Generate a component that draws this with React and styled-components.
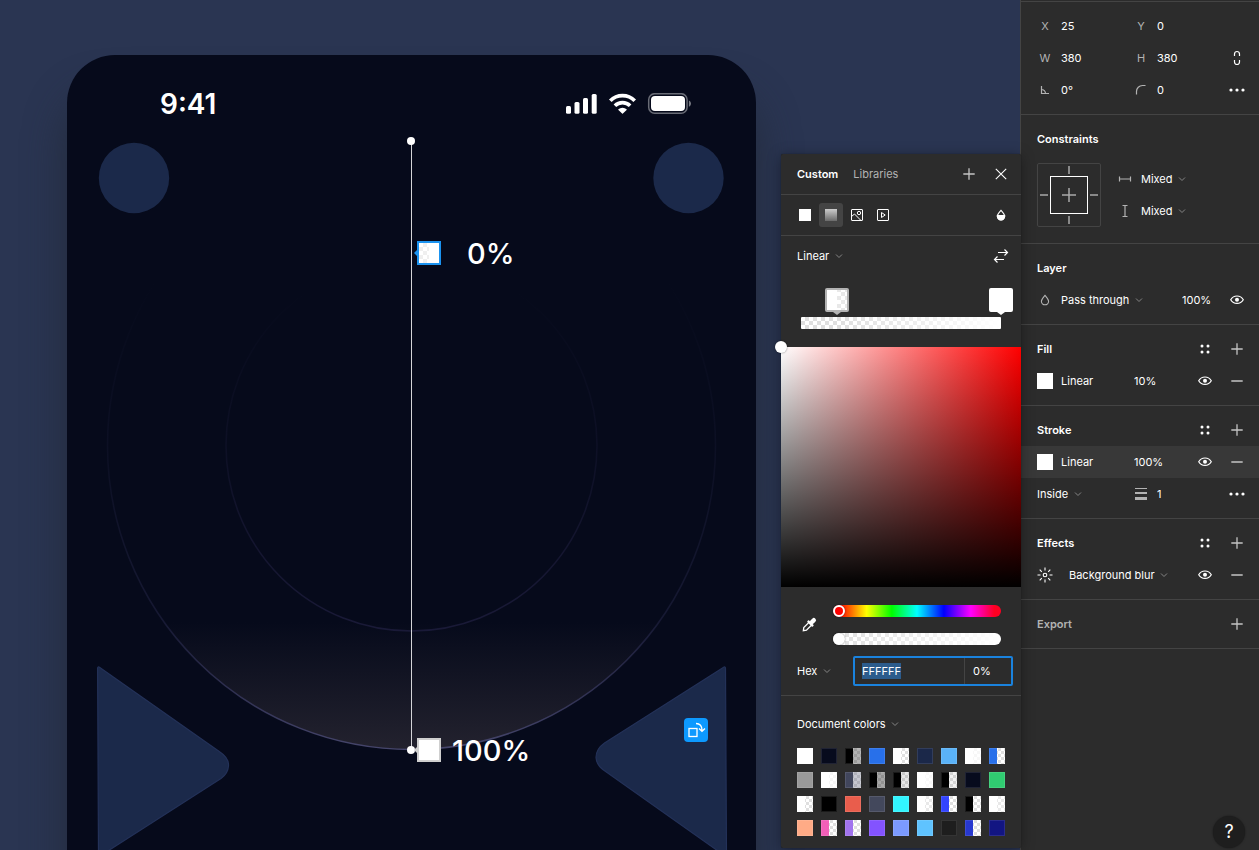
// Vector editor screen: canvas with the phone frame, the gradient picker and the design panel.

import React, { useEffect, useRef, useState } from 'react'
import styled, { createGlobalStyle } from 'styled-components'

const GlobalStyle = createGlobalStyle`
    * {
        box-sizing: border-box;
    }

    body {
        margin: 0;
        background: #2a3552;
        color: #fff;
        font-family: Inter, "Liberation Sans", sans-serif;
        font-size: 11px;
        line-height: 16px;
    }

    button, input, select {
        font: inherit;
        color: inherit;
        background: none;
        border: 0;
        margin: 0;
        padding: 0;
        outline: none;
    }

    svg {
        display: block;
        flex: none;
    }
`;

const checker = 'repeating-conic-gradient(#dfdfdf 0% 25%, #fff 0% 50%)';

/* ---------- shared parts ---------- */

const IconButton = styled.button`
    width: 32px;
    height: 32px;
    flex: none;
    display: flex;
    align-items: center;
    justify-content: center;
    color: ${({ $dim }) => ($dim ? '#c4c4c4' : '#fff')};
`;

const SelectWrap = styled.label`
    display: flex;
    align-items: center;
    gap: 4px;

    select {
        appearance: none;
    }

    svg {
        color: #858585;
        pointer-events: none;
    }
`;

const Spacer = styled.span`
    flex: 1;
`;

// every glyph is drawn round the middle of its box
function Icon({ children, size = 24, width = 1 }) {
  return (
    <svg width={size} height={size} viewBox={`${-size / 2} ${-size / 2} ${size} ${size}`}
        fill="none" stroke="currentColor" strokeWidth={width} aria-hidden="true">
        {children}
    </svg>
  )
}

const Plus = () => <Icon width={1.3}><path d="M-5.7 0H5.7M0 -5.7V5.7" /></Icon>
const Minus = () => <Icon width={1.5}><path d="M-5.7 0H5.7" /></Icon>
const Chevron = () => <Icon size={10}><path d="M-3 -1.5L0 1.5L3 -1.5" /></Icon>

const Eye = () => (
  <Icon width={1.2}>
      <path d="M-6.3 -0.3C-4.8 -2.8 -2.6 -4 0 -4S4.8 -2.8 6.3 -0.3C4.8 2.2 2.6 3.4 0 3.4S-4.8 2.2 -6.3 -0.3Z" />
      <circle cy="-0.3" r="2" fill="currentColor" stroke="none" />
  </Icon>
)

const Styles = () => (
  <Icon>
      <g fill="currentColor" stroke="none">
          <circle cx="-3" cy="-3" r="1.5" />
          <circle cx="3" cy="-3" r="1.5" />
          <circle cx="-3" cy="3" r="1.5" />
          <circle cx="3" cy="3" r="1.5" />
      </g>
  </Icon>
)

const More = () => (
  <Icon>
      <g fill="currentColor" stroke="none">
          <circle cx="-6" r="1.6" />
          <circle r="1.6" />
          <circle cx="6" r="1.6" />
      </g>
  </Icon>
)

function Dropdown({ label, value }) {
  return (
    <SelectWrap>
        <select aria-label={label} defaultValue={value}>
            <option>{value}</option>
        </select>
        <Chevron />
    </SelectWrap>
  )
}

/* ---------- canvas ---------- */

const Page = styled.div`
    display: flex;
    height: 100vh;
    overflow: hidden;
    position: relative;
`;

const Canvas = styled.main`
    flex: 1;
    min-width: 0;
    position: relative;
    overflow: hidden;
    background: #2a3552;
`;

const Phone = styled.section`
    position: absolute;
    left: 67px;
    top: 55px;
    width: 689px;
    height: 1400px;
    border-radius: 48px;
    background: #060a1b;
    box-shadow: 0 40px 40px rgba(34, 42, 56, 0.9);
`;

const StatusBar = styled.div`
    position: relative;
    display: flex;
    align-items: center;
    justify-content: space-between;
    padding: 33px 64px 0 93px;
    font-size: 28px;
    line-height: 32px;
    font-weight: 600;
`;

const Artwork = styled.svg`
    position: absolute;
    left: 0;
    top: 0;
`;

const GradientLine = styled.div`
    position: absolute;
    left: 411px;
    top: 141px;
    width: 1px;
    height: 609px;
    background: #d4d4d8;
`;

const EndPoint = styled.button`
    position: absolute;
    left: -4px;
    top: ${({ $end }) => ($end ? '605px' : '-4px')};
    width: 8px;
    height: 8px;
    border-radius: 50%;
    background: #fff;
`;

const CanvasStop = styled.button`
    position: absolute;
    left: 417px;
    top: ${({ $top }) => $top}px;
    width: 24px;
    height: 24px;
    border: 2px solid ${({ $active }) => ($active ? '#1b93f0' : '#cfcfcf')};
    background: ${({ $active }) => ($active
        ? `linear-gradient(90deg, rgba(255, 255, 255, 0.5) 50%, #fff 50%), ${checker} 0 0 / 8px 8px`
        : '#fff')};

    &::before {
        content: '';
        position: absolute;
        left: -5px;
        top: 7px;
        border: solid transparent;
        border-width: 3px 3px 3px 0;
        border-right-color: ${({ $active }) => ($active ? '#1b93f0' : '#cfcfcf')};
    }
`;

const StopLabel = styled.span`
    position: absolute;
    left: ${({ $left }) => $left}px;
    top: ${({ $top }) => $top}px;
    font-size: 29px;
    line-height: 36px;
    font-weight: 500;
`;

const RotateBadge = styled.button`
    position: absolute;
    left: 684px;
    top: 718px;
    width: 24px;
    height: 24px;
    border-radius: 4px;
    background: #0d99ff;
`;

function StatusIcons() {
  return (
    <svg width="126" height="22" viewBox="0 0 126 22" fill="#fff" aria-hidden="true">
        <rect x="0" y="13" width="5" height="7.7" rx="1.5" />
        <rect x="8.5" y="9" width="5" height="11.7" rx="1.5" />
        <rect x="17" y="5" width="5" height="15.7" rx="1.5" />
        <rect x="25.7" y="1" width="5" height="19.7" rx="1.5" />
        <g fill="none" stroke="#fff" strokeWidth="3.7">
            <path d="M44.3 7.7a17.3 17.3 0 0 1 24.4 0" />
            <path d="M48.9 12.7a10.8 10.8 0 0 1 15.2 0" />
        </g>
        <path d="M52.4 16.3a6 6 0 0 1 8.2 0a.4 .4 0 0 1 0 .6l-3.7 3.7a.6 .6 0 0 1 -.8 0l-3.7-3.7a.4 .4 0 0 1 0-.6z" />
        <rect x="82.7" y="0.7" width="38.4" height="19.6" rx="6" fill="none" stroke="#fff" strokeOpacity="0.4" strokeWidth="1.5" />
        <rect x="85" y="3" width="34" height="15" rx="4" />
        <path d="M122.9 7.4v6.4c1.3-.5 2.1-1.8 2.1-3.2s-.8-2.7-2.1-3.2z" opacity="0.45" />
    </svg>
  )
}

function PhoneArtwork() {
  return (
    <Artwork width="689" height="1000" viewBox="67 55 689 1000" aria-hidden="true">
        <defs>
            <linearGradient id="glow" x1="0" y1="622" x2="0" y2="750" gradientUnits="userSpaceOnUse">
                <stop offset="0" stopColor="#23222e" stopOpacity="0" />
                <stop offset="1" stopColor="#23222e" />
            </linearGradient>
            <linearGradient id="rim" x1="0" y1="280" x2="0" y2="750" gradientUnits="userSpaceOnUse">
                <stop offset="0" stopColor="#34345f" stopOpacity="0" />
                <stop offset="0.4" stopColor="#34345f" stopOpacity="0.15" />
                <stop offset="0.72" stopColor="#34345f" stopOpacity="0.35" />
                <stop offset="1" stopColor="#46466c" />
            </linearGradient>
            <linearGradient id="innerRim" x1="0" y1="290" x2="0" y2="631" gradientUnits="userSpaceOnUse">
                <stop offset="0" stopColor="#1a1a38" stopOpacity="0" />
                <stop offset="0.5" stopColor="#1a1a38" stopOpacity="0.4" />
                <stop offset="1" stopColor="#1a1a38" />
            </linearGradient>
        </defs>
        <circle cx="134" cy="178" r="35.2" fill="#1b294a" />
        <circle cx="688.5" cy="178" r="35.2" fill="#1b294a" />
        <circle cx="411.5" cy="445.5" r="304" fill="url(#glow)" stroke="url(#rim)" strokeWidth="1.5" />
        <circle cx="411.5" cy="445.5" r="185.5" fill="none" stroke="url(#innerRim)" strokeWidth="1.5" />
        <g fill="#1b294a" stroke="#233158" strokeWidth="1.2" strokeLinejoin="round">
            <path d="M97.6 668.5Q97.6 666 99.8 667.4L220 752Q229 758 228.5 766Q228 773.5 221 778.5L98.5 857Z" />
            <path d="M725.5 668.5Q725.5 666 723.3 667.4L604.5 743Q596 749 596 757.5Q596.5 765 603.5 770L726.5 857Z" />
        </g>
    </Artwork>
  )
}

/* ---------- gradient picker ---------- */

const Picker = styled.aside`
    position: absolute;
    top: 154px;
    right: 238px;
    width: 240px;
    background: #2c2c2c;
    border-radius: 2px;
    box-shadow: 0 2px 14px rgba(0, 0, 0, 0.35), 0 0 1px rgba(0, 0, 0, 0.6);
`;

const PickerHeader = styled.header`
    display: flex;
    align-items: center;
    height: 41px;
    padding: 0 4px 0 16px;
    border-bottom: 1px solid #444;
`;

const Tab = styled.button`
    margin-right: 15px;
    font-weight: ${({ $active }) => ($active ? 600 : 400)};
    color: ${({ $active }) => ($active ? '#fff' : '#b3b3b3')};
`;

const TypeBar = styled.div`
    display: flex;
    align-items: center;
    gap: 2px;
    height: 41px;
    padding: 0 4px 0 12px;
    border-bottom: 1px solid #444;
`;

const TypeButton = styled.button`
    width: 24px;
    height: 24px;
    border-radius: 3px;
    background: ${({ $active }) => ($active ? '#444' : 'none')};
`;

const ModeRow = styled.div`
    display: flex;
    align-items: center;
    justify-content: space-between;
    height: 40px;
    padding: 0 4px 0 16px;
`;

const StopTrack = styled.div`
    position: relative;
    margin: 0 20px;
    padding: 41px 0 18px;
`;

const StopBar = styled.div`
    height: 12px;
    border-radius: 1px;
    background: linear-gradient(90deg, rgba(255, 255, 255, 0) 18%, #fff), ${checker} 0 0 / 8px 8px;
`;

const StopHandle = styled.button`
    position: absolute;
    top: 12px;
    left: ${({ $at }) => $at}%;
    transform: translateX(-50%);
    width: 24px;
    height: 24px;
    border: 2px solid ${({ $active }) => ($active ? '#b3b3b3' : '#fff')};
    border-radius: 2px;
    background: ${({ $active }) => ($active
        ? `linear-gradient(90deg, #fff 50%, rgba(255, 255, 255, 0.3) 50%), ${checker} 2px 2px / 8px 8px`
        : '#fff')};

    &::after {
        content: '';
        position: absolute;
        left: 6px;
        top: 22px;
        border: solid transparent;
        border-width: 3px 4px 0;
        border-top-color: ${({ $active }) => ($active ? '#b3b3b3' : '#fff')};
    }
`;

const Saturation = styled.div`
    position: relative;
    height: 240px;
    background: linear-gradient(0deg, #000, transparent), linear-gradient(90deg, #fff, #f00);
`;

const SaturationHandle = styled.button`
    position: absolute;
    left: -6px;
    top: -6px;
    width: 12px;
    height: 12px;
    border-radius: 50%;
    background: #fff;
    box-shadow: 0 0 2px rgba(0, 0, 0, 0.5);
`;

const SliderRow = styled.div`
    display: flex;
    align-items: center;
    gap: 8px;
    padding: 18px 20px 11px 12px;
`;

const Sliders = styled.div`
    flex: 1;
    display: flex;
    flex-direction: column;
    gap: 16px;
`;

const Slider = styled.input`
    appearance: none;
    width: 100%;
    height: 12px;
    border-radius: 6px;
    background: ${({ $track }) => $track};

    &::-webkit-slider-thumb {
        appearance: none;
        width: 12px;
        height: 12px;
        border: 2px solid #fff;
        border-radius: 50%;
        background: ${({ $thumb }) => $thumb};
        box-shadow: 0 0 2px rgba(0, 0, 0, 0.5);
    }
`;

const HexRow = styled.div`
    display: flex;
    align-items: center;
    justify-content: space-between;
    padding: 0 8px 9px 16px;
    border-bottom: 1px solid #444;
`;

const HexBox = styled.div`
    display: flex;
    width: 160px;
    height: 30px;
    border: 2px solid #1a82dd;
    border-radius: 2px;

    input {
        min-width: 0;
    }

    input:first-child {
        flex: 1;
        padding-left: 7px;
    }

    input:last-child {
        width: 47px;
        padding-left: 8px;
        border-left: 1px solid #444;
    }

    input::selection {
        color: #fff;
        background: #2c5c8c;
    }
`;

const DocumentColors = styled.div`
    padding: 12px 16px;
`;

const DocumentTitle = styled.div`
    display: flex;
    align-items: center;
    height: 32px;
    margin-bottom: 8px;
`;

const SwatchGrid = styled.div`
    display: grid;
    grid-template-columns: repeat(9, 16px);
    justify-content: space-between;
    gap: 8px 0;
`;

const Swatch = styled.button`
    width: 16px;
    height: 16px;
    flex: none;
    box-shadow: inset 0 0 0 1px rgba(255, 255, 255, 0.1);
    background: ${({ $left, $right }) => ($right
        ? `linear-gradient(90deg, ${$left} 50%, ${$right} 50%), ${checker} 0 0 / 6px 6px`
        : $left)};
`;

const clear = 'rgba(255, 255, 255, 0)';

const documentColors = [
  ['#fff'], ['#070b1d'], ['#000', 'rgba(0, 0, 0, 0.3)'], ['#2870ea'], ['#fff', clear],
  ['#1b2849'], ['#5ab2f7'], ['#fff', 'rgba(255, 255, 255, 0.75)'], ['#2870ea', clear],
  ['#999'], ['#fff', 'rgba(255, 255, 255, 0.7)'], ['#41465c', 'rgba(65, 70, 100, 0.3)'],
  ['#000', 'rgba(0, 0, 0, 0.35)'], ['#000', 'rgba(0, 0, 0, 0.1)'], ['#fff', 'rgba(255, 255, 255, 0.8)'],
  ['#000', 'rgba(0, 0, 0, 0.05)'], ['#070b1d'], ['#30cc71'],
  ['#fff', clear], ['#000'], ['#e95d4c'], ['#43485c'], ['#32f5ff'],
  ['#fff', 'rgba(255, 255, 255, 0.3)'], ['#3344ff', clear], ['#000', clear], ['#fff', 'rgba(255, 255, 255, 0.3)'],
  ['#ffab86'], ['#f25fb8', clear], ['#a173ee', clear], ['#8353ff'], ['#7b9aff'],
  ['#5fc3ff'], ['#1e1e1e'], ['#2738cf', clear], ['#121582'],
];

function GradientPicker() {
  const hexRef = useRef(null);
  const [hue, setHue] = useState(0);
  const [alpha, setAlpha] = useState(0);

  // the hex value starts out selected, ready to be typed over
  useEffect(() => {
    hexRef.current.focus();
    hexRef.current.select();
  }, []);

  return (
    <Picker>
        <PickerHeader>
            <Tab $active>Custom</Tab>
            <Tab>Libraries</Tab>
            <Spacer />
            <IconButton $dim aria-label="Create style"><Plus /></IconButton>
            <IconButton aria-label="Close">
                <Icon width={1.1}><path d="M-5.2 -5.2L5.2 5.2M5.2 -5.2L-5.2 5.2" /></Icon>
            </IconButton>
        </PickerHeader>

        <TypeBar>
            <TypeButton aria-label="Solid">
                <Icon><rect x="-6" y="-6" width="12" height="12" fill="#fff" stroke="none" /></Icon>
            </TypeButton>
            <TypeButton $active aria-label="Gradient">
                <Icon>
                    <linearGradient id="fade" x1="0" y1="0" x2="0" y2="1">
                        <stop offset="0" stopColor="#ccc" />
                        <stop offset="1" stopColor="#6a6a6a" />
                    </linearGradient>
                    <rect x="-6" y="-6" width="12" height="12" fill="url(#fade)" stroke="none" />
                </Icon>
            </TypeButton>
            <TypeButton aria-label="Image">
                <Icon>
                    <rect x="-5.5" y="-5.5" width="11" height="11" rx="0.5" />
                    <circle cx="2" cy="-2" r="1.7" />
                    <path d="M-5.5 1.5L-2.5 -1L4 5.5" />
                </Icon>
            </TypeButton>
            <TypeButton aria-label="Video">
                <Icon>
                    <rect x="-5.5" y="-5.5" width="11" height="11" rx="0.5" />
                    <path d="M-1.5 -2.5L2.2 0L-1.5 2.5Z" />
                </Icon>
            </TypeButton>
            <Spacer />
            <IconButton aria-label="Blend mode">
                <Icon width={1.2}>
                    <path d="M0 -4.6C-1.8 -2.6 -3.6 -0.8 -3.6 1.2A3.6 3.6 0 0 0 3.6 1.2C3.6 -0.8 1.8 -2.6 0 -4.6Z" />
                    <path d="M-3.6 0.6H3.6V1.2A3.6 3.6 0 0 1 -3.6 1.2Z" fill="currentColor" />
                </Icon>
            </IconButton>
        </TypeBar>

        <ModeRow>
            <Dropdown label="Gradient type" value="Linear" />
            <IconButton aria-label="Flip gradient">
                <Icon width={1.2}><path d="M-3 -3.5H6.5M3.5 -6.5L6.5 -3.5L3.5 -0.5M3 3.5H-6.5M-3.5 0.5L-6.5 3.5L-3.5 6.5" /></Icon>
            </IconButton>
        </ModeRow>

        <StopTrack>
            <StopHandle $active $at={18} aria-label="Stop at 18%" />
            <StopHandle $at={100} aria-label="Stop at 100%" />
            <StopBar />
        </StopTrack>

        <Saturation>
            <SaturationHandle aria-label="Saturation" />
        </Saturation>

        <SliderRow>
            <IconButton aria-label="Pick color">
                <Icon>
                    <g transform="rotate(45)">
                        <path d="M-1.9 -1.5V5.5L0 8L1.9 5.5V-1.5" strokeWidth="1.3" />
                        <rect x="-3.8" y="-3.2" width="7.6" height="2.4" rx="0.8" fill="currentColor" stroke="none" />
                        <rect x="-2.2" y="-9" width="4.4" height="7" rx="2.2" fill="currentColor" stroke="none" />
                    </g>
                </Icon>
            </IconButton>
            <Sliders>
                <Slider type="range" aria-label="Hue" min="0" max="360" value={hue}
                    onChange={(e) => setHue(Number(e.target.value))}
                    $track="linear-gradient(90deg, #f00 4%, #ff0 20%, #0f0 35%, #0ff 50%, #00f 66%, #f0f 82%, #f02 96%)"
                    $thumb="#f00" />
                <Slider type="range" aria-label="Opacity" min="0" max="100" value={alpha}
                    onChange={(e) => setAlpha(Number(e.target.value))}
                    $track={`linear-gradient(90deg, rgba(255, 255, 255, 0), #fff), ${checker} 0 0 / 8px 8px`}
                    $thumb="#fff" />
            </Sliders>
        </SliderRow>

        <HexRow>
            <Dropdown label="Color format" value="Hex" />
            <HexBox>
                <input ref={hexRef} aria-label="Hex" defaultValue="FFFFFF" />
                <input aria-label="Alpha" defaultValue="0%" />
            </HexBox>
        </HexRow>

        <DocumentColors>
            <DocumentTitle><Dropdown label="Color source" value="Document colors" /></DocumentTitle>
            <SwatchGrid>
                {documentColors.map(([left, right], i) => (
                    <Swatch key={i} $left={left} $right={right} aria-label={`Color ${i + 1}`} />
                ))}
            </SwatchGrid>
        </DocumentColors>
    </Picker>
  )
}

/* ---------- design panel ---------- */

const Sidebar = styled.aside`
    width: 239px;
    flex: none;
    padding-top: 1px;
    background: #2c2c2c;
    border-left: 1px solid #444;
`;

const Section = styled.section`
    padding: 8px 0;
    border-bottom: 1px solid #444;

    &:first-child {
        border-top: 1px solid #444;
    }
`;

const Row = styled.div`
    display: flex;
    align-items: center;
    height: 32px;
    padding: 0 6px 0 16px;
    background: ${({ $selected }) => ($selected ? '#383838' : 'none')};
`;

const Title = styled.h2`
    flex: 1;
    margin: 0;
    font-size: 11px;
    font-weight: 600;
    color: ${({ $dim }) => ($dim ? '#b3b3b3' : '#fff')};
`;

const Field = styled.label`
    display: flex;
    align-items: center;
    gap: 8px;
    width: ${({ $short }) => ($short ? '72px' : '96px')};
    height: 32px;
    flex: none;

    input {
        width: 48px;
    }
`;

const FieldMark = styled.span`
    display: flex;
    justify-content: center;
    width: 16px;
    flex: none;
    color: #b3b3b3;
`;

const Percent = styled.input`
    width: ${({ $narrow }) => ($narrow ? '39px' : '48px')};
    margin-left: 1px;
`;

const Column = styled.div`
    width: 96px;
    flex: none;
`;

const Constraints = styled.div`
    display: flex;
    gap: 16px;
    padding: 8px 16px;
`;

const EffectCell = styled.div`
    display: flex;
    align-items: center;
    gap: 16px;
`;

const HelpButton = styled.button`
    position: absolute;
    right: 14px;
    bottom: 2px;
    width: 32px;
    height: 32px;
    border-radius: 50%;
    background: #1e1e1e;
    box-shadow: 0 0 2px rgba(0, 0, 0, 0.5);
    font-size: 18px;
`;

function NumberField({ mark, label, value, short }) {
  return (
    <Field $short={short}>
        <FieldMark>{mark}</FieldMark>
        <input aria-label={label} defaultValue={value} />
    </Field>
  )
}

function SectionHeader({ title }) {
  return (
    <Row>
        <Title>{title}</Title>
        <IconButton aria-label={`${title} styles`}><Styles /></IconButton>
        <IconButton $dim aria-label={`Add ${title}`}><Plus /></IconButton>
    </Row>
  )
}

function PaintRow({ name, percent, selected }) {
  return (
    <Row $selected={selected}>
        <Field as="div">
            <Swatch $left="#fff" aria-label={`${name} paint`} />
            <span>Linear</span>
        </Field>
        <Percent aria-label={`${name} opacity`} defaultValue={percent} />
        <Spacer />
        <IconButton aria-label="Toggle visibility"><Eye /></IconButton>
        <IconButton $dim aria-label={`Remove ${name}`}><Minus /></IconButton>
    </Row>
  )
}

function DesignPanel() {
  return (
    <Sidebar>
        <Section>
            <Row>
                <NumberField mark="X" label="X" value="25" />
                <NumberField short mark="Y" label="Y" value="0" />
            </Row>
            <Row>
                <NumberField mark="W" label="Width" value="380" />
                <NumberField short mark="H" label="Height" value="380" />
                <Spacer />
                <IconButton aria-label="Constrain proportions">
                    <Icon width={1.2}><path d="M-2.5 -2V-4A2.5 2.5 0 0 1 2.5 -4V-2M-2.5 2V4A2.5 2.5 0 0 0 2.5 4V2" /></Icon>
                </IconButton>
            </Row>
            <Row>
                <NumberField label="Rotation" value="0°"
                    mark={<Icon size={16} width={1.2}><path d="M-3.5 -4V3.5H4M-3.5 -0.5A4 4 0 0 1 0.5 3.5" /></Icon>} />
                <NumberField short label="Corner radius" value="0"
                    mark={<Icon size={16} width={1.2}><path d="M-4.5 4.5V1.5A6 6 0 0 1 1.5 -4.5H4.5" /></Icon>} />
                <Spacer />
                <IconButton aria-label="Independent corners"><More /></IconButton>
            </Row>
        </Section>

        <Section>
            <Row><Title>Constraints</Title></Row>
            <Constraints>
                <svg width="64" height="64" viewBox="0 0 64 64" fill="none" aria-hidden="true">
                    <rect x="0.5" y="0.5" width="63" height="63" rx="1.5" stroke="#444" />
                    <rect x="13.5" y="13.5" width="37" height="37" stroke="#fff" />
                    <path d="M32 25V39M25 32H39M32 3V11M32 53V61M3 32H11M53 32H61" stroke="#a8a8a8" strokeWidth="1.5" />
                </svg>
                <div>
                    <Field as="div">
                        <FieldMark><Icon size={16} width={1.2}><path d="M-5.5 0H5.5M-5.5 -2.5V2.5M5.5 -2.5V2.5" /></Icon></FieldMark>
                        <Dropdown label="Horizontal constraint" value="Mixed" />
                    </Field>
                    <Field as="div">
                        <FieldMark><Icon size={16} width={1.2}><path d="M0 -5.5V5.5M-2.5 -5.5H2.5M-2.5 5.5H2.5" /></Icon></FieldMark>
                        <Dropdown label="Vertical constraint" value="Mixed" />
                    </Field>
                </div>
            </Constraints>
        </Section>

        <Section>
            <Row><Title>Layer</Title></Row>
            <Row>
                <Field as="div">
                    <FieldMark>
                        <Icon size={16} width={1.1}><path d="M0 -4.7C-1.8 -2.6 -3.6 -0.8 -3.6 1.2A3.6 3.6 0 0 0 3.6 1.2C3.6 -0.8 1.8 -2.6 0 -4.7Z" /></Icon>
                    </FieldMark>
                    <Dropdown label="Blend mode" value="Pass through" />
                </Field>
                <Spacer />
                <Percent $narrow aria-label="Layer opacity" defaultValue="100%" />
                <IconButton aria-label="Toggle visibility"><Eye /></IconButton>
            </Row>
        </Section>

        <Section>
            <SectionHeader title="Fill" />
            <PaintRow name="fill" percent="10%" />
        </Section>

        <Section>
            <SectionHeader title="Stroke" />
            <PaintRow name="stroke" percent="100%" selected />
            <Row>
                <Column><Dropdown label="Stroke position" value="Inside" /></Column>
                <NumberField short label="Stroke weight" value="1"
                    mark={
                        <Icon size={16}>
                            <path d="M-6 -6H6V-5H-6ZM-6 -2H6V0H-6ZM-6 3H6V6H-6Z" fill="currentColor" stroke="none" />
                        </Icon>
                    } />
                <Spacer />
                <IconButton aria-label="Advanced stroke"><More /></IconButton>
            </Row>
        </Section>

        <Section>
            <SectionHeader title="Effects" />
            <Row>
                <EffectCell>
                    <Icon size={16} width={1.1}>
                        <circle r="1.8" />
                        <path d="M0 -7.5V-4.5M0 4.5V7.5M-7.5 0H-4.5M4.5 0H7.5M-5.3 -5.3L-3.2 -3.2M3.2 3.2L5.3 5.3M5.3 -5.3L3.2 -3.2M-3.2 3.2L-5.3 5.3" />
                    </Icon>
                    <Dropdown label="Effect" value="Background blur" />
                </EffectCell>
                <Spacer />
                <IconButton aria-label="Toggle visibility"><Eye /></IconButton>
                <IconButton $dim aria-label="Remove effect"><Minus /></IconButton>
            </Row>
        </Section>

        <Section>
            <Row>
                <Title $dim>Export</Title>
                <IconButton $dim aria-label="Add export"><Plus /></IconButton>
            </Row>
        </Section>
    </Sidebar>
  )
}

function App() {
  return (
    <Page>
        <GlobalStyle />
        <Canvas>
            <Phone>
                <PhoneArtwork />
                <StatusBar>
                    <span>9:41</span>
                    <StatusIcons />
                </StatusBar>
            </Phone>
            <GradientLine>
                <EndPoint aria-label="Gradient start" />
                <EndPoint $end aria-label="Gradient end" />
            </GradientLine>
            <CanvasStop $active $top={241} aria-label="First stop" />
            <CanvasStop $top={738} aria-label="Last stop" />
            <StopLabel $left={467} $top={236}>0%</StopLabel>
            <StopLabel $left={452} $top={733}>100%</StopLabel>
            <RotateBadge aria-label="Rotate copies">
                <Icon width={1.3}>
                    <rect x="-7" y="-1.5" width="8" height="8" />
                    <path d="M0 -6.5C4 -6.5 6 -4 6 0.5M3 -1.5L6 1.3L9 -1.5" />
                </Icon>
            </RotateBadge>
        </Canvas>
        <DesignPanel />
        <GradientPicker />
        <HelpButton aria-label="Help">?</HelpButton>
    </Page>
  )
}

export default App
